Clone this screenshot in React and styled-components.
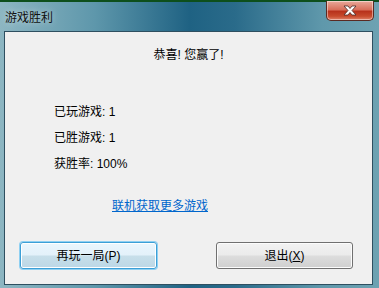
import React from 'react';
import styled, { createGlobalStyle } from 'styled-components';

const Global = createGlobalStyle`
  html, body {
    margin: 0;
    padding: 0;
    background: #1a4a22;
  }
`;

const Window = styled.div`
  width: 379px;
  height: 288px;
  display: flex;
  flex-direction: column;
  background: linear-gradient(90deg, #8db6c2 0%, #5e97ab 25%, #1f6283 50%, #2a6b8a 62%, #5f98ab 85%, #6da2b2 100%);
  font-family: 'Liberation Sans', 'Noto Sans CJK SC', sans-serif;
  font-size: 12px;
  color: #000;
  overflow: hidden;
`;

const TopStrip = styled.div`
  height: 2px;
  background: #0d4f1c;
  flex-shrink: 0;
`;

const TitleBar = styled.div`
  height: 29px;
  display: flex;
  align-items: flex-start;
  justify-content: space-between;
  padding-left: 5px;
  padding-right: 5px;
`;

const Title = styled.div`
  margin-top: 6px;
  font-family: 'Noto Sans CJK SC', sans-serif;
  font-size: 12px;
  color: #111;
  text-shadow: 0 0 6px rgba(255, 255, 255, 0.6);
`;

const CloseButton = styled.div`
  width: 46px;
  height: 19px;
  margin-top: -1px;
  border: 1px solid #5a2a22;
  border-top: none;
  border-radius: 0 0 5px 5px;
  background: linear-gradient(180deg, #e9a99a 0%, #d9705c 45%, #b8321c 55%, #c74a2c 80%, #e0826a 100%);
  box-shadow: inset 0 0 0 1px rgba(255, 255, 255, 0.45);
  display: flex;
  align-items: center;
  justify-content: center;
`;

const Client = styled.div`
  flex: 1;
  margin: 0 6px 3px 4px;
  background: #f0f0f0;
  border: 1px solid #2e4f60;
  display: flex;
  flex-direction: column;
`;

const Heading = styled.div`
  margin-top: 15px;
  line-height: 16px;
  text-align: center;
`;

const Stats = styled.div`
  margin-top: 41px;
  padding-left: 49px;
  display: flex;
  flex-direction: column;
  gap: 10px;
`;

const StatLine = styled.div`
  line-height: 16px;
`;

const Link = styled.a`
  margin-top: 26px;
  margin-left: 107px;
  line-height: 16px;
  color: #0066cc;
  text-decoration: underline;
  align-self: flex-start;
`;

const ButtonRow = styled.div`
  margin-top: 28px;
  padding: 0 19px 0 15px;
  display: flex;
  justify-content: space-between;
`;

const Button = styled.div`
  width: 137px;
  height: 27px;
  box-sizing: border-box;
  border-radius: 3px;
  border: 1px solid ${p => (p.$focused ? '#3c9fd6' : '#707070')};
  background: ${p =>
    p.$focused
      ? 'linear-gradient(180deg, #eaf6fd 0%, #e3f1fa 48%, #c7dfea 52%, #bcd7e6 100%)'
      : 'linear-gradient(180deg, #f2f2f2 0%, #ebebeb 48%, #dddddd 52%, #cfcfcf 100%)'};
  box-shadow: ${p => (p.$focused ? '0 0 0 1px #8fd0f2, inset 0 0 0 1px #fff' : 'inset 0 0 0 1px #fcfcfc')};
  display: flex;
  align-items: center;
  justify-content: center;
  line-height: 16px;
`;

const Key = styled.span`
  text-decoration: underline;
`;

const App = () => (
  <>
    <Global />
    <Window>
      <TopStrip />
      <TitleBar>
        <Title>游戏胜利</Title>
        <CloseButton>
          <svg width="14" height="11" viewBox="0 0 14 11">
            <path
              d="M1 1 L5 1 L7 3.5 L9 1 L13 1 L9 5.5 L13 10 L9 10 L7 7.5 L5 10 L1 10 L5 5.5 Z"
              fill="#fff"
              stroke="#4a2a26"
              strokeWidth="0.8"
            />
          </svg>
        </CloseButton>
      </TitleBar>
      <Client>
        <Heading>恭喜! 您赢了!</Heading>
        <Stats>
          <StatLine>已玩游戏: 1</StatLine>
          <StatLine>已胜游戏: 1</StatLine>
          <StatLine>获胜率: 100%</StatLine>
        </Stats>
        <Link href="#">联机获取更多游戏</Link>
        <ButtonRow>
          <Button $focused>再玩一局(P)</Button>
          <Button>
            退出(<Key>X</Key>)
          </Button>
        </ButtonRow>
      </Client>
    </Window>
  </>
);

export default App;
